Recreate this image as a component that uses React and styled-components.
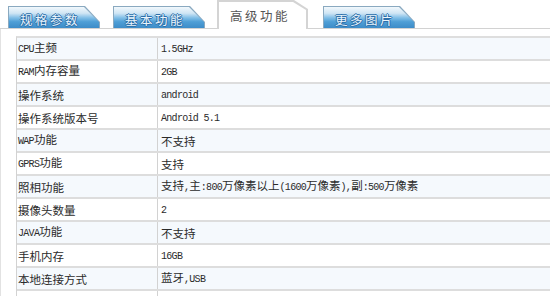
import React from 'react';
import styled, { createGlobalStyle } from 'styled-components';

const GlobalStyle = createGlobalStyle`
  body {
    margin: 0;
    background: #fff;
  }
`;

const Page = styled.div`
  width: 550px;
  height: 296px;
  overflow: hidden;
  font-family: "Noto Sans CJK SC", "Noto Sans", sans-serif;
  color: #2b2b2b;
`;

const TabBar = styled.div`
  display: flex;
  align-items: flex-end;
  height: 28px;
  padding-left: 8px;
  border-bottom: 1px solid #d2d2d2;
`;

const TabShell = styled.div`
  position: relative;
  width: ${p => p.active ? '91px' : '92px'};
  height: ${p => p.active ? '29px' : '22px'};
  margin-right: ${p => p.gap}px;
  margin-bottom: ${p => p.active ? '-1px' : '0'};
  padding: ${p => p.active ? '2px 2px 0 2px' : '1px 1px 0 1px'};
  box-sizing: border-box;
  background: ${p => p.active ? '#d4d4d4' : '#8aa9c0'};
  clip-path: ${p => p.active
    ? 'polygon(0 0, calc(100% - 14px) 0, 100% 9px, 100% 100%, 0 100%)'
    : 'polygon(0 0, calc(100% - 15px) 0, 100% 16px, 100% 100%, 0 100%)'};
`;

const TabFace = styled.div`
  height: 100%;
  display: flex;
  align-items: center;
  padding-left: 11px;
  padding-top: ${p => p.active ? '0' : '3px'};
  box-sizing: border-box;
  font-size: 12.5px;
  letter-spacing: 2.5px;
  clip-path: ${p => p.active
    ? 'polygon(0 0, calc(100% - 13px) 0, 100% 8px, 100% 100%, 0 100%)'
    : 'polygon(0 0, calc(100% - 15px) 0, 100% 15px, 100% 100%, 0 100%)'};
  background: ${p => p.active
    ? '#fff'
    : 'linear-gradient(to bottom, #f2f8fc 0%, #cfe5f4 30%, #86c1e8 50%, #4f9fd6 70%, #3d8cc8 100%)'};
  color: ${p => p.active ? '#555' : '#eaf5fd'};
  text-shadow: ${p => p.active
    ? 'none'
    : '1px 0 #2c6fa9, -1px 0 #2c6fa9, 0 1px #2c6fa9, 0 -1px #2c6fa9'};
`;

const Body = styled.div`
  padding-top: 7px;
  border-left: 1px solid #e2e2e2;
`;

const Table = styled.div`
  margin-left: 15px;
  width: 560px;
  border-left: 1px solid #d2d2d2;
  border-top: 2px solid #dedede;
`;

const Row = styled.div`
  display: grid;
  grid-template-columns: 141px 1fr;
  height: 23px;
  box-sizing: border-box;
  border-bottom: 2px solid #dddddd;
  background: ${p => p.shaded ? '#f5f9fd' : '#fff'};
`;

const Cell = styled.div`
  display: flex;
  align-items: center;
  padding-left: ${p => p.label ? '1px' : '3px'};
  font-size: 11.5px;
  white-space: nowrap;
  border-right: ${p => p.label ? '1px solid #d2d2d2' : 'none'};
`;

const Line = styled.span`
  line-height: 16px;
`;

const Lat = styled.span`
  font-family: "Liberation Mono", "DejaVu Sans Mono", monospace;
  font-size: 10px;
  letter-spacing: -0.7px;
`;

const tabs = [
  { name: '规格参数', gap: 13 },
  { name: '基本功能', gap: 12 },
  { name: '高级功能', gap: 15, active: true },
  { name: '更多图片', gap: 0 },
];

const specs = [
  ['CPU主频', '1.5GHz'],
  ['RAM内存容量', '2GB'],
  ['操作系统', 'android'],
  ['操作系统版本号', 'Android 5.1'],
  ['WAP功能', '不支持'],
  ['GPRS功能', '支持'],
  ['照相功能', '支持,主:800万像素以上(1600万像素),副:500万像素'],
  ['摄像头数量', '2'],
  ['JAVA功能', '不支持'],
  ['手机内存', '16GB'],
  ['本地连接方式', '蓝牙,USB'],
  ['蓝牙功能', '支持'],
];

// split into runs so latin text gets the narrow font
const Mixed = ({ text }) => {
  const parts = text.match(/[\x00-\x7f]+|[^\x00-\x7f]+/g) || [];
  return (
    <Line>
      {parts.map((s, i) =>
        /^[\x00-\x7f]+$/.test(s) ? <Lat key={i}>{s}</Lat> : <span key={i}>{s}</span>
      )}
    </Line>
  );
};

const App = () => {
  return (
    <Page>
      <GlobalStyle />
      <TabBar>
        {tabs.map(t => (
          <TabShell key={t.name} active={t.active} gap={t.gap}>
            <TabFace active={t.active}>{t.name}</TabFace>
          </TabShell>
        ))}
      </TabBar>
      <Body>
        <Table>
          {specs.map(([k, v], i) => (
            <Row key={k} shaded={i % 2 === 0}>
              <Cell label><Mixed text={k} /></Cell>
              <Cell><Mixed text={v} /></Cell>
            </Row>
          ))}
        </Table>
      </Body>
    </Page>
  );
};

export default App;
